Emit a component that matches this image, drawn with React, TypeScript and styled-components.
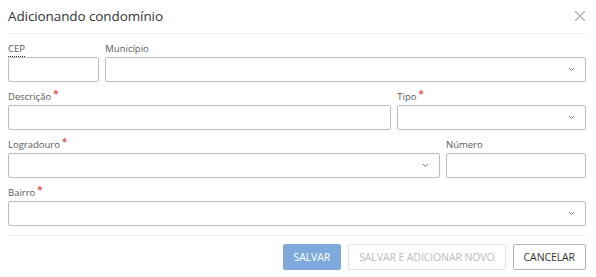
import React from "react";
import styled, { createGlobalStyle } from "styled-components";

const GlobalStyle = createGlobalStyle`
  html, body {
    margin: 0;
    padding: 0;
    background: #ffffff;
    font-family: "Open Sans", "Liberation Sans", sans-serif;
  }
  * {
    box-sizing: border-box;
  }
`;

const colors = {
  text: "#333333",
  label: "#5a5a5a",
  border: "#bdbdbd",
  divider: "#eeeeee",
  required: "#d9534f",
  primary: "#7ea9dc",
  muted: "#bbbbbb",
};

const Dialog = styled.div`
  width: 596px;
  height: 277px;
  padding: 0 10px 0 8px;
  background: #ffffff;
  display: flex;
  flex-direction: column;
`;

const Header = styled.div`
  height: 34px;
  display: flex;
  align-items: center;
  justify-content: space-between;
  border-bottom: 1px solid ${colors.divider};
  padding-bottom: 1px;
`;

const Title = styled.h4`
  margin: 0;
  font-size: 13.5px;
  font-weight: 400;
  color: ${colors.text};
  letter-spacing: -0.1px;
`;

const CloseButton = styled.button`
  border: none;
  background: none;
  padding: 0;
  width: 13px;
  height: 13px;
  display: flex;
  align-items: center;
  justify-content: center;
  cursor: pointer;
`;

const Body = styled.div`
  padding: 7px 0 9px;
  display: flex;
  flex-direction: column;
  gap: 7px;
  border-bottom: 1px solid ${colors.divider};
`;

const Row = styled.div`
  display: grid;
  grid-template-columns: repeat(12, 1fr);
  column-gap: 6px;
`;

const Field = styled.div<{ span: number }>`
  grid-column: span ${(p) => p.span};
  display: flex;
  flex-direction: column;
`;

const Label = styled.label`
  height: 16px;
  line-height: 16px;
  font-size: 9.5px;
  font-weight: 500;
  color: ${colors.label};
  white-space: nowrap;
`;

const Abbr = styled.abbr`
  text-decoration: none;
  border-bottom: 1px dotted ${colors.text};
  padding-bottom: 1px;
`;

const Required = styled.span`
  color: ${colors.required};
  font-size: 9.5px;
  font-weight: 700;
  margin-left: 2px;
  position: relative;
  top: -3px;
`;

const Input = styled.div`
  height: 25px;
  border: 1px solid ${colors.border};
  border-radius: 2px;
  background: #ffffff;
`;

const SelectBox = styled(Input)`
  display: flex;
  align-items: center;
  justify-content: flex-end;
  padding-right: 10px;
`;

const Footer = styled.div`
  display: flex;
  justify-content: flex-end;
  gap: 7px;
  padding-top: 8px;
`;

const Button = styled.button<{ variant: "primary" | "disabled" | "default" }>`
  height: 26px;
  padding: 0 10px;
  font-family: "Open Sans", "Liberation Sans", sans-serif;
  font-size: 10.5px;
  text-transform: uppercase;
  border-radius: 2px;
  letter-spacing: -0.1px;
  border: 1px solid
    ${(p) =>
      p.variant === "primary"
        ? colors.primary
        : p.variant === "disabled"
        ? "#e2e2e2"
        : "#b5b5b5"};
  background: ${(p) => (p.variant === "primary" ? colors.primary : "#ffffff")};
  color: ${(p) =>
    p.variant === "primary"
      ? "#ffffff"
      : p.variant === "disabled"
      ? colors.muted
      : colors.text};
`;

const Chevron = () => (
  <svg width="7" height="5" viewBox="0 0 7 5">
    <path d="M1 1 L3.5 3.5 L6 1" fill="none" stroke="#777" strokeWidth="1" />
  </svg>
);

const CloseIcon = () => (
  <svg width="12" height="12" viewBox="0 0 12 12">
    <path
      d="M1 1 L11 11 M11 1 L1 11"
      fill="none"
      stroke="#b8b8b8"
      strokeWidth="1.5"
    />
  </svg>
);

const FormField = ({
  span,
  label,
  required,
  select,
  abbr,
}: {
  span: number;
  label: string;
  required?: boolean;
  select?: boolean;
  abbr?: boolean;
}) => (
  <Field span={span}>
    <Label>
      {abbr ? <Abbr title="Código de Endereçamento Postal">{label}</Abbr> : label}
      {required && <Required>*</Required>}
    </Label>
    {select ? (
      <SelectBox>
        <Chevron />
      </SelectBox>
    ) : (
      <Input />
    )}
  </Field>
);

const App = () => {
  return (
    <>
      <GlobalStyle />
      <Dialog>
        <Header>
          <Title>Adicionando condomínio</Title>
          <CloseButton>
            <CloseIcon />
          </CloseButton>
        </Header>
        <Body>
          <Row>
            <FormField span={2} label="CEP" abbr />
            <FormField span={10} label="Município" select />
          </Row>
          <Row>
            <FormField span={8} label="Descrição" required />
            <FormField span={4} label="Tipo" required select />
          </Row>
          <Row>
            <FormField span={9} label="Logradouro" required select />
            <FormField span={3} label="Número" />
          </Row>
          <Row>
            <FormField span={12} label="Bairro" required select />
          </Row>
        </Body>
        <Footer>
          <Button variant="primary">Salvar</Button>
          <Button variant="disabled">Salvar e adicionar novo</Button>
          <Button variant="default">Cancelar</Button>
        </Footer>
      </Dialog>
    </>
  );
};

export default App;
